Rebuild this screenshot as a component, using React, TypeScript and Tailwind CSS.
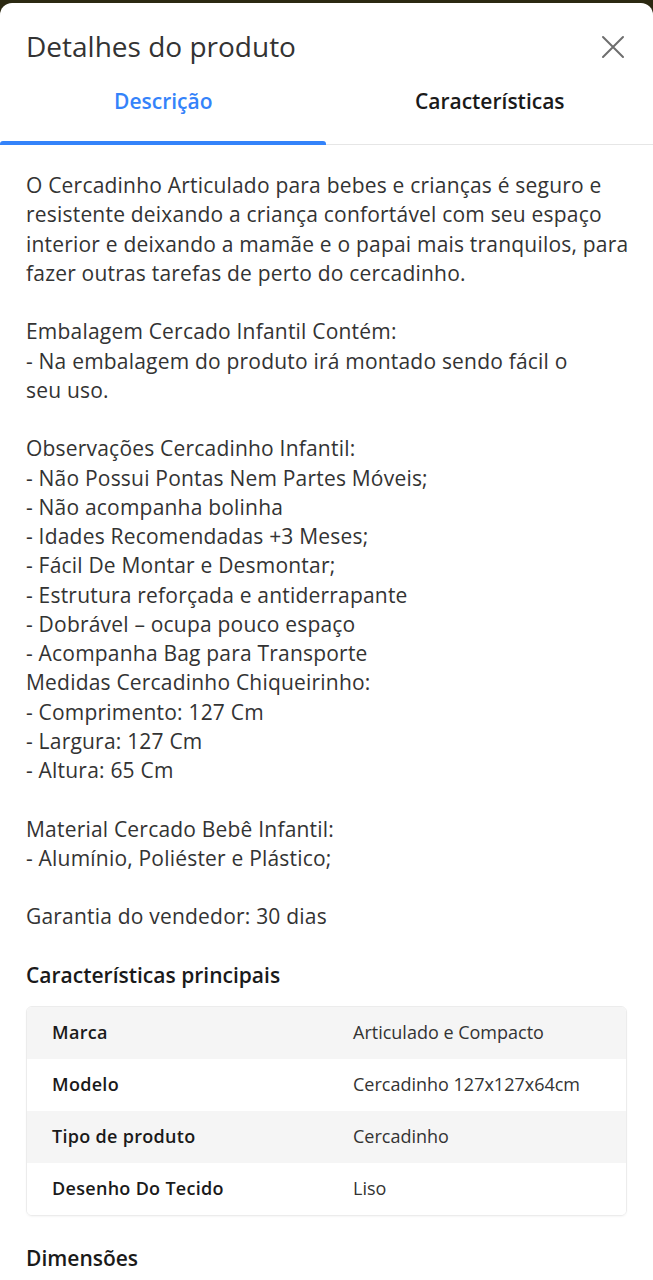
import React from "react";

const description: string[] = [
  "O Cercadinho Articulado para bebes e crianças é seguro e",
  "resistente deixando a criança confortável com seu espaço",
  "interior e deixando a mamãe e o papai mais tranquilos, para",
  "fazer outras tarefas de perto do cercadinho.",
  "",
  "Embalagem Cercado Infantil Contém:",
  "- Na embalagem do produto irá montado sendo fácil o",
  "seu uso.",
  "",
  "Observações Cercadinho Infantil:",
  "- Não Possui Pontas Nem Partes Móveis;",
  "- Não acompanha bolinha",
  "- Idades Recomendadas +3 Meses;",
  "- Fácil De Montar e Desmontar;",
  "- Estrutura reforçada e antiderrapante",
  "- Dobrável – ocupa pouco espaço",
  "- Acompanha Bag para Transporte",
  "Medidas Cercadinho Chiqueirinho:",
  "- Comprimento: 127 Cm",
  "- Largura: 127 Cm",
  "- Altura: 65 Cm",
  "",
  "Material Cercado Bebê Infantil:",
  "- Alumínio, Poliéster e Plástico;",
  "",
  "Garantia do vendedor: 30 dias",
];

const specs: [string, string][] = [
  ["Marca", "Articulado e Compacto"],
  ["Modelo", "Cercadinho 127x127x64cm"],
  ["Tipo de produto", "Cercadinho"],
  ["Desenho Do Tecido", "Liso"],
];

export default function App() {
  return (
    <div
      className="w-[653px] h-[1280px] overflow-hidden bg-[#2b2912] pt-[3px]"
      style={{ fontFamily: "'Open Sans', Lato, sans-serif" }}
    >
      <div className="h-full bg-white rounded-t-[12px] text-[#333333]">
        {/* header */}
        <div className="flex justify-between items-start pl-[26px] pr-[28px] pt-[25px] h-[84px]">
          <h1 className="text-[28px] font-medium leading-[36px]">Detalhes do produto</h1>
          <svg width="24" height="24" viewBox="0 0 24 24" className="mt-[7px]">
            <path d="M2 2 L22 22 M22 2 L2 22" stroke="#6e6e6e" strokeWidth="2" strokeLinecap="round" />
          </svg>
        </div>

        {/* tabs */}
        <div className="relative flex h-[58px] border-b border-[#e6e6e6]">
          <div className="w-1/2 flex justify-center text-[21px] leading-[28px] font-semibold text-[#3483fa]">Descrição</div>
          <div className="w-1/2 flex justify-center text-[21px] leading-[28px] font-semibold text-[#1a1a1a]">Características</div>
          <div className="absolute left-0 bottom-[-1px] w-[326px] h-[4px] bg-[#3483fa] rounded-t-[3px]" />
        </div>

        {/* description text */}
        <div className="px-[26px] pt-[26px] text-[21px] leading-[29.25px] tracking-[0.2px] text-[#333333]">
          {description.map((line, i) => (
            <div key={i} className="whitespace-nowrap h-[29.25px]">
              {line}
            </div>
          ))}
        </div>

        {/* main specs */}
        <h2 className="px-[26px] mt-[29px] text-[21px] font-semibold leading-[28px] text-[#1a1a1a]">
          Características principais
        </h2>
        <div className="mx-[26px] mt-[17px] rounded-[6px] border border-[#ececec] overflow-hidden shadow-[0_1px_2px_rgba(0,0,0,0.04)]">
          {specs.map(([k, v], i) => (
            <div
              key={k}
              className={`flex h-[52px] items-center text-[18px] ${i % 2 === 0 ? "bg-[#f5f5f5]" : "bg-white"}`}
            >
              <div className="w-[326px] pl-[25px] font-semibold tracking-[0.3px] text-[#1a1a1a]">{k}</div>
              <div className="text-[#333333]">{v}</div>
            </div>
          ))}
        </div>

        <h2 className="px-[26px] mt-[28px] text-[21px] font-semibold leading-[28px] text-[#1a1a1a]">Dimensões</h2>
      </div>
    </div>
  );
}
